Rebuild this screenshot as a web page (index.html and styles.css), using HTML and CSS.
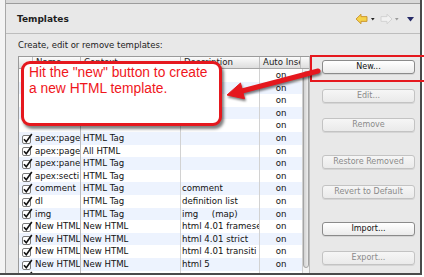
FILE: index.html
```html
<!DOCTYPE html>
<html>
<head>
<meta charset="utf-8">
<link rel="stylesheet" href="styles.css">
</head>
<body>
<div class="window">
  <div class="strip"></div>
  <div class="panel">
    <div class="topband"></div>
    <div class="head">
      <div class="title">Templates</div>
      <svg class="toolbar" width="60" height="12" viewBox="0 0 60 12">
        <polygon points="1,6 6,1.2 6,3.6 12,3.6 12,8.4 6,8.4 6,10.8" fill="#f5d24a" stroke="#c8922c" stroke-width="0.9" stroke-linejoin="round"/>
        <polygon points="16,5 19.6,5 17.8,7.6" fill="#222"/>
        <polygon points="37,6 32,1.2 32,3.6 26,3.6 26,8.4 32,8.4 32,10.8" fill="#f1f1f1" stroke="#cfcfcf" stroke-width="0.9" stroke-linejoin="round"/>
        <polygon points="40,5 43.6,5 41.8,7.6" fill="#9a9a9a"/>
        <polygon points="52,4 59,4 55.5,8.4" fill="#262a68"/>
      </svg>
    </div>
    <div class="body">
      <div class="label">Create, edit or remove templates:</div>
      <div class="content">
        <div class="table">
          <div class="thead">
            <div class="h hcheck"></div>
            <div class="h hname">Name</div>
            <div class="h hctx">Context</div>
            <div class="h hdesc">Description</div>
            <div class="h hauto">Auto Insert</div>
            <div class="h hend"></div>
          </div>
          <div class="tbody">
            <div class="rows">
              <div class="row"><div class="c ck"></div><div class="c nm"></div><div class="c cx"></div><div class="c ds"></div><div class="c au">on</div></div>
              <div class="row"><div class="c ck"></div><div class="c nm"></div><div class="c cx"></div><div class="c ds"></div><div class="c au">on</div></div>
              <div class="row"><div class="c ck"></div><div class="c nm"></div><div class="c cx"></div><div class="c ds"></div><div class="c au">on</div></div>
              <div class="row"><div class="c ck"></div><div class="c nm"></div><div class="c cx"></div><div class="c ds"></div><div class="c au">on</div></div>
              <div class="row"><div class="c ck"></div><div class="c nm"></div><div class="c cx"></div><div class="c ds"></div><div class="c au">on</div></div>
              <div class="row"><div class="c ck"><svg class="cb" width="11" height="11" viewBox="0 0 11 11"><rect x="0.5" y="2.5" width="8" height="8" rx="1.5" fill="#fff" stroke="#7a7a7a"/><path d="M2 6.2 L4.3 8.8 L9.8 1" fill="none" stroke="#111" stroke-width="1.6"/></svg></div><div class="c nm">apex:page</div><div class="c cx">HTML Tag</div><div class="c ds"></div><div class="c au">on</div></div>
              <div class="row"><div class="c ck"><svg class="cb" width="11" height="11" viewBox="0 0 11 11"><rect x="0.5" y="2.5" width="8" height="8" rx="1.5" fill="#fff" stroke="#7a7a7a"/><path d="M2 6.2 L4.3 8.8 L9.8 1" fill="none" stroke="#111" stroke-width="1.6"/></svg></div><div class="c nm">apex:page</div><div class="c cx">All HTML</div><div class="c ds"></div><div class="c au">on</div></div>
              <div class="row"><div class="c ck"><svg class="cb" width="11" height="11" viewBox="0 0 11 11"><rect x="0.5" y="2.5" width="8" height="8" rx="1.5" fill="#fff" stroke="#7a7a7a"/><path d="M2 6.2 L4.3 8.8 L9.8 1" fill="none" stroke="#111" stroke-width="1.6"/></svg></div><div class="c nm">apex:pane</div><div class="c cx">HTML Tag</div><div class="c ds"></div><div class="c au">on</div></div>
              <div class="row"><div class="c ck"><svg class="cb" width="11" height="11" viewBox="0 0 11 11"><rect x="0.5" y="2.5" width="8" height="8" rx="1.5" fill="#fff" stroke="#7a7a7a"/><path d="M2 6.2 L4.3 8.8 L9.8 1" fill="none" stroke="#111" stroke-width="1.6"/></svg></div><div class="c nm">apex:secti</div><div class="c cx">HTML Tag</div><div class="c ds"></div><div class="c au">on</div></div>
              <div class="row"><div class="c ck"><svg class="cb" width="11" height="11" viewBox="0 0 11 11"><rect x="0.5" y="2.5" width="8" height="8" rx="1.5" fill="#fff" stroke="#7a7a7a"/><path d="M2 6.2 L4.3 8.8 L9.8 1" fill="none" stroke="#111" stroke-width="1.6"/></svg></div><div class="c nm">comment</div><div class="c cx">HTML Tag</div><div class="c ds">comment</div><div class="c au">on</div></div>
              <div class="row"><div class="c ck"><svg class="cb" width="11" height="11" viewBox="0 0 11 11"><rect x="0.5" y="2.5" width="8" height="8" rx="1.5" fill="#fff" stroke="#7a7a7a"/><path d="M2 6.2 L4.3 8.8 L9.8 1" fill="none" stroke="#111" stroke-width="1.6"/></svg></div><div class="c nm">dl</div><div class="c cx">HTML Tag</div><div class="c ds">definition list</div><div class="c au">on</div></div>
              <div class="row"><div class="c ck"><svg class="cb" width="11" height="11" viewBox="0 0 11 11"><rect x="0.5" y="2.5" width="8" height="8" rx="1.5" fill="#fff" stroke="#7a7a7a"/><path d="M2 6.2 L4.3 8.8 L9.8 1" fill="none" stroke="#111" stroke-width="1.6"/></svg></div><div class="c nm">img</div><div class="c cx">HTML Tag</div><div class="c ds">img&nbsp;&nbsp;&nbsp;&nbsp; (map)</div><div class="c au">on</div></div>
              <div class="row"><div class="c ck"><svg class="cb" width="11" height="11" viewBox="0 0 11 11"><rect x="0.5" y="2.5" width="8" height="8" rx="1.5" fill="#fff" stroke="#7a7a7a"/><path d="M2 6.2 L4.3 8.8 L9.8 1" fill="none" stroke="#111" stroke-width="1.6"/></svg></div><div class="c nm">New HTML</div><div class="c cx">New HTML</div><div class="c ds">html 4.01 framese</div><div class="c au">on</div></div>
              <div class="row"><div class="c ck"><svg class="cb" width="11" height="11" viewBox="0 0 11 11"><rect x="0.5" y="2.5" width="8" height="8" rx="1.5" fill="#fff" stroke="#7a7a7a"/><path d="M2 6.2 L4.3 8.8 L9.8 1" fill="none" stroke="#111" stroke-width="1.6"/></svg></div><div class="c nm">New HTML</div><div class="c cx">New HTML</div><div class="c ds">html 4.01 strict</div><div class="c au">on</div></div>
              <div class="row"><div class="c ck"><svg class="cb" width="11" height="11" viewBox="0 0 11 11"><rect x="0.5" y="2.5" width="8" height="8" rx="1.5" fill="#fff" stroke="#7a7a7a"/><path d="M2 6.2 L4.3 8.8 L9.8 1" fill="none" stroke="#111" stroke-width="1.6"/></svg></div><div class="c nm">New HTML</div><div class="c cx">New HTML</div><div class="c ds">html 4.01 transiti</div><div class="c au">on</div></div>
              <div class="row"><div class="c ck"><svg class="cb" width="11" height="11" viewBox="0 0 11 11"><rect x="0.5" y="2.5" width="8" height="8" rx="1.5" fill="#fff" stroke="#7a7a7a"/><path d="M2 6.2 L4.3 8.8 L9.8 1" fill="none" stroke="#111" stroke-width="1.6"/></svg></div><div class="c nm">New HTML</div><div class="c cx">New HTML</div><div class="c ds">html 5</div><div class="c au">on</div></div>
              <div class="row"><div class="c ck"><svg class="cb" width="11" height="11" viewBox="0 0 11 11"><rect x="0.5" y="2.5" width="8" height="8" rx="1.5" fill="#fff" stroke="#7a7a7a"/><path d="M2 6.2 L4.3 8.8 L9.8 1" fill="none" stroke="#111" stroke-width="1.6"/></svg></div><div class="c nm"></div><div class="c cx"></div><div class="c ds"></div><div class="c au"></div></div>
            </div>
            <div class="scroll"><div class="thumb"></div></div>
          </div>
        </div>
        <div class="buttons">
          <div class="btn">New...</div>
          <div class="btn dis g15">Edit...</div>
          <div class="btn dis g15">Remove</div>
          <div class="btn dis g23">Restore Removed</div>
          <div class="btn dis g16">Revert to Default</div>
          <div class="btn g23">Import...</div>
          <div class="btn dis g15">Export...</div>
        </div>
      </div>
    </div>
  </div>
</div>

<div class="highlight"></div>
<div class="callout">Hit the "new" button to create<br>a new HTML template.</div>
<svg class="arrow" width="424" height="277" viewBox="0 0 424 277">
  <g class="arrow-g">
    <line x1="318" y1="71" x2="242" y2="91" stroke="#e5181e" stroke-width="5" stroke-linecap="round"/>
    <polygon points="227,95 244.5,98.8 240.5,83" fill="#e5181e" stroke="#e5181e" stroke-width="1" stroke-linejoin="round"/>
  </g>
</svg>
</body>
</html>
```

FILE: styles.css
```css
* { box-sizing: border-box; }
html, body { margin: 0; padding: 0; }
body {
  width: 424px;
  height: 277px;
  overflow: hidden;
  background: #fff;
  position: relative;
  font-family: "DejaVu Sans", sans-serif;
  color: #1e1e1e;
}
.window {
  width: 422px;
  height: 275px;
  border-right: 2px solid #4a4a4a;
  border-bottom: 2px solid #4a4a4a;
  display: flex;
  background: #e8e8e8;
  overflow: hidden;
}
.strip {
  width: 6px;
  flex: none;
  background: #f4f4f4;
  border-right: 1px solid #a8a8a8;
}
.panel {
  flex: 1;
  min-width: 0;
  display: flex;
  flex-direction: column;
}
.topband {
  height: 4px;
  flex: none;
  background: #d9d9d9;
  border-bottom: 1px solid #9c9c9c;
}
.head {
  height: 30px;
  flex: none;
  display: flex;
  align-items: center;
  padding-left: 11px;
  border-bottom: 1px solid #bdbdbd;
}
.title {
  font-weight: bold;
  font-size: 9px;
  color: #1e1e1e;
}
.toolbar {
  display: block;
  margin-left: auto;
  margin-right: 5px;
}
.body {
  flex: 1;
  min-height: 0;
  display: flex;
  flex-direction: column;
  padding: 6px 0 0 12px;
}
.label {
  font-size: 8.5px;
  line-height: 11px;
  color: #222;
}
.content {
  flex: 1;
  min-height: 0;
  display: flex;
  margin-top: 5px;
}
.table {
  width: 292px;
  flex: none;
  display: flex;
  flex-direction: column;
  background: #fff;
  border-left: 1px solid #9a9a9a;
  border-top: 1px solid #9a9a9a;
  border-right: 1px solid #bcbcbc;
  overflow: hidden;
}
.thead {
  height: 12px;
  flex: none;
  display: flex;
  background: linear-gradient(#fbfbfb, #dddddd);
  border-bottom: 1px solid #a5a5a5;
  font-size: 8.6px;
  line-height: 11px;
}
.h {
  border-right: 1px solid #bdbdbd;
  padding-left: 3px;
  overflow: hidden;
  white-space: nowrap;
  color: #222;
}
.hcheck { width: 14px; }
.hname { width: 48px; }
.hctx { width: 100px; }
.hdesc { width: 79px; }
.hauto { width: 41px; }
.hend { flex: 1; border-right: none; }
.tbody {
  flex: 1;
  min-height: 0;
  display: flex;
}
.rows {
  flex: 1;
  overflow: hidden;
}
.row {
  display: flex;
  height: 12.6px;
  font-size: 8.6px;
  line-height: 12.6px;
  color: #111;
}
.row:nth-child(even) { background: #edf3fe; }
.c {
  overflow: hidden;
  white-space: nowrap;
  padding-left: 2px;
  border-right: 1px solid #d2d2d2;
}
.ck {
  width: 14px;
  border-right: none;
  padding-left: 3px;
  display: flex;
  align-items: center;
}
.cb { display: block; }
.nm { width: 48px; border-right-color: #bdbdbd; }
.cx { width: 100px; }
.ds { width: 79px; padding-left: 1px; }
.au {
  flex: 1;
  border-right: none;
  padding-left: 0;
  text-align: center;
}
.scroll {
  width: 7px;
  flex: none;
  display: flex;
  flex-direction: column;
  background: #f3f3f3;
  border-left: 1px solid #cfcfcf;
  padding: 2px 0 5px 0;
}
.thumb {
  flex: 1;
  background: linear-gradient(90deg, #d2d2d2, #ececec);
  border: 1px solid #a4a4a4;
  border-radius: 3px;
}
.buttons {
  width: 93px;
  flex: none;
  margin-left: 12px;
  padding-top: 4px;
  display: flex;
  flex-direction: column;
}
.btn {
  height: 14px;
  flex: none;
  border: 1px solid #8b8b8b;
  border-radius: 3px;
  background: linear-gradient(#ffffff, #ebebeb);
  box-shadow: 0 1px 0 rgba(0, 0, 0, 0.08);
  font-size: 8px;
  line-height: 12px;
  text-align: center;
  color: #111;
}
.btn.dis {
  border-color: #c3c3c3;
  background: linear-gradient(#f6f6f6, #eaeaea);
  color: #8a8a8a;
}
.g15 { margin-top: 15px; }
.g16 { margin-top: 16px; }
.g23 { margin-top: 23px; }

.highlight {
  position: absolute;
  left: 310px;
  top: 55px;
  width: 120px;
  height: 27px;
  border: 2.5px solid #e5181e;
}
.callout {
  position: absolute;
  left: 21px;
  top: 61px;
  width: 201px;
  height: 65px;
  border: 3px solid #e5181e;
  border-radius: 9px;
  background: #fff;
  box-shadow: 2px 3px 3px rgba(0, 0, 0, 0.5);
  padding: 1px 0 0 5px;
  color: #f0161c;
  font-family: "Liberation Sans", Arial, sans-serif;
  font-size: 13.8px;
  line-height: 16px;
  white-space: nowrap;
}
.arrow {
  position: absolute;
  left: 0;
  top: 0;
  pointer-events: none;
}
.arrow-g {
  filter: drop-shadow(1px 2px 1.2px rgba(0, 0, 0, 0.5));
}
```
